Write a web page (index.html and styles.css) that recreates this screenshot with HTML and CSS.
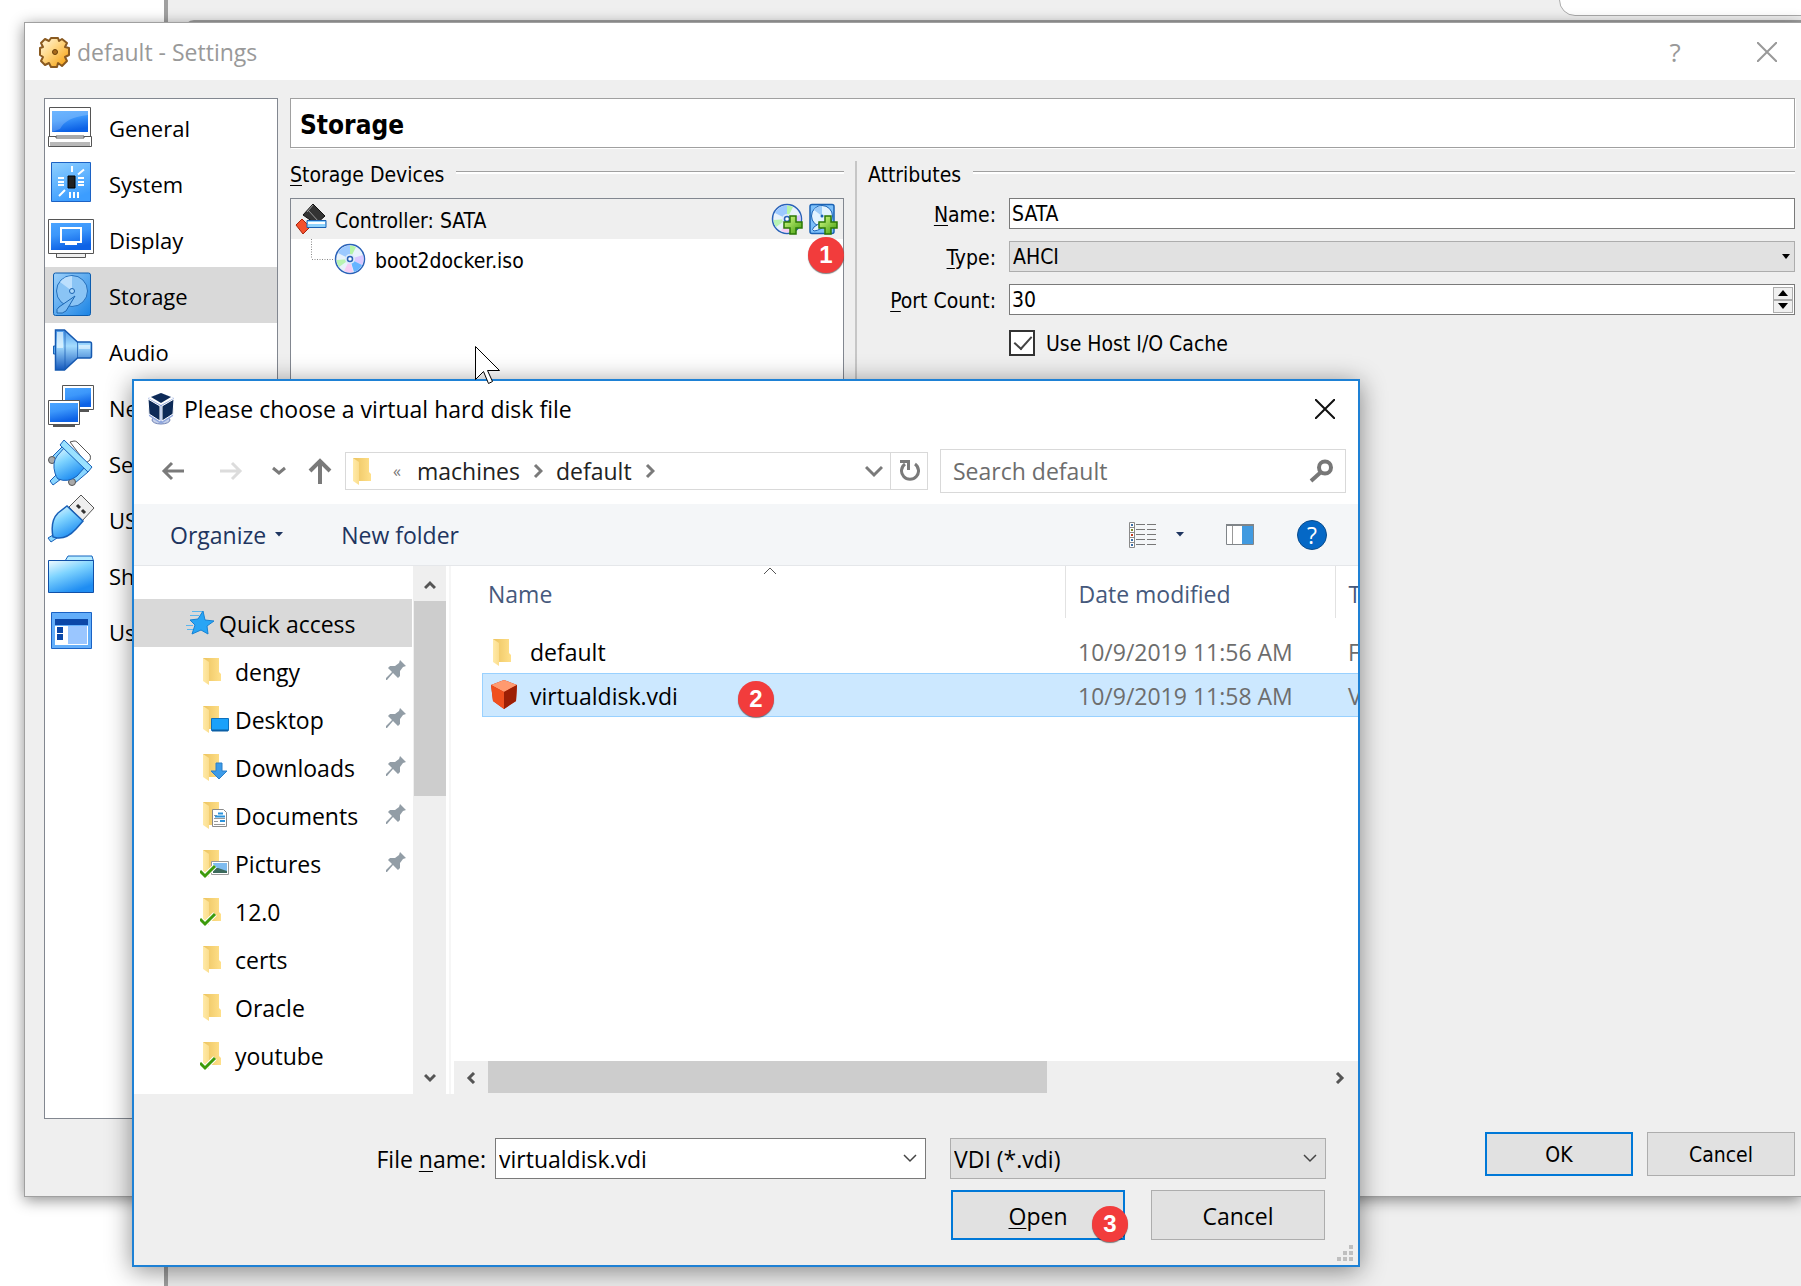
FILE: index.html
```html
<!DOCTYPE html>
<html lang="en">
<head>
<meta charset="utf-8">
<meta name="viewport" content="width=device-width, initial-scale=1">
<title>default - Settings</title>
<link rel="stylesheet" href="styles.css">
</head>
<body>
<svg class="defs" aria-hidden="true">
  <defs>
    <linearGradient id="screen" x1="0" y1="0" x2="0.3" y2="1"><stop offset="0" stop-color="#4aa4ff"/><stop offset=".45" stop-color="#3c97fb"/><stop offset="1" stop-color="#0d62e6"/></linearGradient>
    <linearGradient id="sky" x1="0" y1="0" x2="0.4" y2="1"><stop offset="0" stop-color="#8fd0ff"/><stop offset="1" stop-color="#3c9dff"/></linearGradient>
    <linearGradient id="ice" x1="0" y1="0" x2="0.5" y2="1"><stop offset="0" stop-color="#f2fcff"/><stop offset=".45" stop-color="#7fd4ff"/><stop offset="1" stop-color="#1f8df2"/></linearGradient>
    <linearGradient id="cone" x1="0" y1="0" x2="0" y2="1"><stop offset="0" stop-color="#4e9bea"/><stop offset=".4" stop-color="#a4dcff"/><stop offset="1" stop-color="#1458bd"/></linearGradient>
    <linearGradient id="disk" x1="0" y1="0" x2="1" y2="1"><stop offset="0" stop-color="#9fd2fb"/><stop offset="1" stop-color="#1a83e4"/></linearGradient>
    <linearGradient id="flap" x1="0" y1="0" x2="1" y2="0"><stop offset="0" stop-color="#ffeaa8"/><stop offset="1" stop-color="#fbdd8d"/></linearGradient>
    <linearGradient id="folderback" x1="0" y1="0" x2="1" y2="0"><stop offset="0" stop-color="#ecc35f"/><stop offset="1" stop-color="#ffe08a"/></linearGradient>
    <linearGradient id="gold" x1="0" y1="0" x2="1" y2="1"><stop offset="0" stop-color="#fff8e4"/><stop offset=".4" stop-color="#ffd98a"/><stop offset="1" stop-color="#f59a00"/></linearGradient>
    <linearGradient id="plus" x1="0" y1="0" x2="1" y2="1"><stop offset="0" stop-color="#d9ff8a"/><stop offset="1" stop-color="#3f9c0a"/></linearGradient>
    <symbol id="folder" viewBox="0 0 28 32">
      <path d="M3 3h16v14l2 2v7H3z" fill="url(#folderback)"/>
      <path d="M3 3l6 4v23l-6-4z" fill="url(#flap)"/>
    </symbol>
    <symbol id="tick" viewBox="0 0 28 32">
      <path d="M0 24l5 5L15 19" fill="none" stroke="#fff" stroke-width="5"/>
      <path d="M0 24l5 5L15 19" fill="none" stroke="#3d9b0b" stroke-width="3"/>
    </symbol>
    <symbol id="pin" viewBox="0 0 20 20">
      <path d="M14 0l6 6-3 1-3 4 0 5-2 2-5-5-6 7-1 0 0-2 6-6-4-4 2-2 5 0 4-3z" fill="#929da6"/>
    </symbol>
    <symbol id="disc" viewBox="0 0 32 32">
      <circle cx="16" cy="16" r="14.500" fill="#e8f2fb" stroke="#2a62b8" stroke-width="1.500"/>
      <path d="M16 16L4 10A13.500 13.500 0 0 1 16 2.500z" fill="#9cc9ff"/>
      <path d="M16 16V2.500a13 13 0 0 1 6 1.500z" fill="#b5f5a8"/>
      <path d="M16 16l13-4a13.500 13.500 0 0 1-1 10z" fill="#d9c8ff"/>
      <path d="M16 16l12 6a13 13 0 0 1-8 7z" fill="#66b4ff"/>
      <path d="M16 16l3 13a13 13 0 0 1-9-1z" fill="#f6cdf4"/>
      <path d="M16 16L5 24a13 13 0 0 1-2.500-7z" fill="#b9f3b3"/>
      <circle cx="16" cy="16" r="5" fill="#dcebfb"/>
      <circle cx="16" cy="16" r="2.500" fill="#fff" stroke="#2a62b8" stroke-width="1.500"/>
    </symbol>
    <symbol id="add" viewBox="0 0 20 20">
      <path d="M7 1h6v6h6v6h-6v6H7v-6H1V7h6z" fill="url(#plus)" stroke="#2c7806" stroke-width="1.500"/>
    </symbol>
    <symbol id="thinchev" viewBox="0 0 14 9"><path d="M1 1l6 6 6-6" fill="none" stroke="#444" stroke-width="1.500"/></symbol>
  </defs>
</svg>

<div class="desktop">
  <div class="backwin">
    <div class="backwin-search"></div>
    <div class="backwin-panel"></div>
  </div>

  <section class="settings" aria-label="default - Settings">
    <header class="titlebar">
      <svg class="app-icon" width="32" height="32" viewBox="0 0 32 32">
        <path d="M12 2h7l1 3 3-2 5 4-2 4 4 1v7l-4 2 2 4-5 5-4-3-1 4h-6l-2-4-4 2-4-4 2-4-3-2v-7l3-1-2-4 4-4 4 2z" fill="url(#gold)" stroke="#8a5a20" stroke-width="2" stroke-linejoin="round"/>
        <circle cx="16" cy="16" r="2.500" fill="#a86a1c" stroke="#6b4008"/>
      </svg>
      <h1 class="titlebar-text">default - Settings</h1>
      <button class="caption-btn help" type="button" aria-label="Help">?</button>
      <button class="caption-btn" type="button" aria-label="Close">
        <svg width="20" height="20" viewBox="0 0 20 20"><path d="M0 0l20 20M20 0L0 20" stroke="#999" stroke-width="2"/></svg>
      </button>
    </header>

    <div class="settings-body">
      <nav class="categories" aria-label="Categories">
        <a class="category" href="#general"><svg viewBox="0 0 46 44"><path d="M1.500 2.500h41v29h-41z" fill="#fff" stroke="#555"/><path d="M4 6h36v21H4z" fill="url(#screen)"/><path d="M4 6h36v4Q18 12 12 24l-8 3z" fill="#fff" opacity=".2"/><path d="M.500 31.500h43v10H.500z" fill="#fff" stroke="#555"/><path d="M2 37h40v4H2z" fill="#b8b8b8"/><path d="M8 31h28v2H8z" fill="#fff" stroke="#555"/></svg><span>General</span></a>
        <a class="category" href="#system"><svg viewBox="0 0 46 44"><path d="M3.500 1.500h39v39h-39z" fill="url(#sky)" stroke="#1c62c4"/><path d="M20 15h7v12h-7z" fill="#222" stroke="#000"/><path d="M10 17h6M10 21h6M10 24h6M30 17h6M30 21h6M30 24h6M24 5v6M22 31v6M26 31v6M30 31v6M30 13.500l6-5M11 35l6-6" stroke="#fff" stroke-width="2"/></svg><span>System</span></a>
        <a class="category" href="#display"><svg viewBox="0 0 46 44"><path d="M8.500 36.500h29v4h-29z" fill="#eee" stroke="#555"/><path d="M.500 2.500h45v34H.500z" fill="#fff" stroke="#555"/><path d="M3 6h40v27H3z" fill="url(#screen)"/><path d="M13 11h20v14H13zM17 27h12" fill="none" stroke="#fff" stroke-width="2"/></svg><span>Display</span></a>
        <a class="category current" href="#storage" aria-current="page"><svg viewBox="0 0 46 44"><rect x="5.500" y="0" width="37" height="42.500" rx="2" fill="url(#disk)" stroke="#0d5dae"/><circle cx="24" cy="18" r="15.500" fill="#8ac4f5" stroke="#2570bd"/><path d="M24 18L12 9a15 15 0 0 1 12-6z" fill="#c8e6ff" opacity=".8"/><circle cx="24" cy="18" r="2.500" fill="#a8d6fa" stroke="#1b62b0"/><path d="M27 23L11 34q-3 2-2 6 6 1 9-2z" fill="#7dbcf2" stroke="#1c66b2"/></svg><span>Storage</span></a>
        <a class="category" href="#audio"><svg viewBox="0 0 46 44"><path d="M5.500 17h3v8h-3z" fill="#6cc0ff" stroke="#1c62b4"/><path d="M7.500 1h9L29.500 13h12.500q1.500 0 1.500 2v12q0 2-1.500 2H29.500L16.500 41h-9z" fill="url(#cone)" stroke="#1659b0" stroke-width="1.500"/><path d="M17 1v40M29.500 13v16" stroke="#1659b0" opacity=".7"/><path d="M9 3h6v16H9z" fill="#e8f8ff" opacity=".7"/><path d="M31 16h11v4H31z" fill="#fff" opacity=".5"/></svg><span>Audio</span></a>
        <a class="category" href="#network"><svg viewBox="0 0 46 44"><path d="M14.500.500h31v24h-31z" fill="#fff" stroke="#555"/><path d="M17 3h26v19H17z" fill="url(#screen)"/><path d="M28 26h13" stroke="#555" stroke-width="2"/><path d="M.500 15.500h31v24H.500z" fill="#fff" stroke="#555"/><path d="M2 18h28v19H2z" fill="url(#screen)"/><path d="M5 41h22" stroke="#555" stroke-width="2"/></svg><span>Network</span></a>
        <a class="category" href="#serial"><svg viewBox="0 0 46 44"><path d="M22 1l4-1q2 0 3 1l13 13q1 2 0 5l-4 3z" fill="#fff" stroke="#555"/><path d="M4 16L16 4l5 5L9 21zM22 38l13-12 5 5-13 11z" fill="#8ad6ff" stroke="#1860b8"/><circle cx="4" cy="19" r="3.500" fill="#aaa" stroke="#555"/><circle cx="24" cy="41" r="3.500" fill="#aaa" stroke="#555"/><path d="M8 34l-6 6 3 4 8-6z" fill="#8ad6ff" stroke="#1860b8"/><path d="M7 32Q4 22 9 15l8-9 20 20-8 9Q20 42 10 38q-2-2-3-6z" fill="url(#ice)" stroke="#1860b8"/><path d="M12 4l4-5 28 27-4 5z" fill="#9ae2ff" stroke="#1860b8"/></svg><span>Serial Ports</span></a>
        <a class="category" href="#usb"><svg viewBox="0 0 46 44"><path d="M21 10L33-2 46 11 34 24z" fill="#eee" stroke="#555"/><path d="M29 8l3 3M34 13l3 3" stroke="#333" stroke-width="3"/><path d="M5 38l-5 3 3 4 6-4z" fill="#8ad6ff" stroke="#1860b8"/><path d="M5 40Q2 24 10 16l9-7 16 15-7 8Q19 42 9 41z" fill="url(#ice)" stroke="#1860b8" stroke-width="1.500"/></svg><span>USB</span></a>
        <a class="category" href="#shared"><svg viewBox="0 0 46 44"><path d="M17 8l3-5h24l1.500 5v6H17z" fill="#b8ecff" stroke="#1565c0"/><path d="M.500 7.500h45v32H.500z" fill="url(#ice)" stroke="#1050a8"/></svg><span>Shared Folders</span></a>
        <a class="category" href="#interface"><svg viewBox="0 0 46 44"><path d="M3.500 3.500h40v36h-40z" fill="#63aefa" stroke="#1a62c4"/><path d="M7 10h33v6H7z" fill="#0b47a8"/><path d="M7 17h33v19H7z" fill="#fff"/><path d="M9 18h6v6H9zM9 25h6v6H9z" fill="#0b47a8"/><path d="M20 17h19v18H20z" fill="#9ac6ff"/></svg><span>User Interface</span></a>
      </nav>

      <main class="page">
        <h2 class="page-title">Storage</h2>
        <div class="columns">
          <section class="devices">
            <h3 class="group-title"><span><u>S</u>torage Devices</span></h3>
            <div class="tree">
              <div class="tree-row controller">
                <svg class="ctrl-icon" width="32" height="32" viewBox="0 0 32 32"><path d="M18 1l12 12-9 8L8 12z" fill="#333" stroke="#111"/><path d="M13 7l11 12M18 2l-6 7" stroke="#999"/><path d="M1 22l6-6 8 8-7 7z" fill="#f4502c" stroke="#a8230c"/><path d="M12 17.500h19v7H12z" fill="#8fd2fb" stroke="#1a62b4"/><path d="M13 19h17v2H13z" fill="#fff"/></svg>
                <span class="tree-text">Controller: SATA</span>
                <button class="tool" type="button" aria-label="Add optical drive"><svg width="32" height="32" viewBox="0 0 32 32"><use href="#disc"/><use href="#add" x="12" y="12" width="20" height="20"/></svg></button>
                <button class="tool" type="button" aria-label="Add hard disk"><svg width="32" height="32" viewBox="0 0 32 32"><rect x="2" y="1.500" width="24" height="29" rx="2" fill="#7cc0fa" stroke="#1a62b4" stroke-width="1.500"/><circle cx="14" cy="13" r="10.500" fill="#e2f3ff" stroke="#1a62b4"/><path d="M14 13L6 7a10 10 0 0 1 8-4z" fill="#9ccbf8"/><circle cx="14" cy="13" r="1.500" fill="#1a62b4"/><path d="M12 20l-6 4q-3 3 0 4 3 0 8-3" fill="#e2f3ff" stroke="#1a62b4"/><use href="#add" x="10" y="12" width="20" height="20"/></svg></button>
              </div>
              <div class="tree-row medium">
                <svg width="30" height="40" viewBox="0 0 30 40"><path d="M7.500 0v20M8 20.500h22" stroke="#888" stroke-dasharray="1 1.500" fill="none"/></svg>
                <svg width="32" height="32" viewBox="0 0 32 32"><use href="#disc"/></svg>
                <span class="tree-text">boot2docker.iso</span>
              </div>
              <span class="badge badge-add">1</span>
            </div>
          </section>

          <section class="attributes">
            <h3 class="group-title"><span>Attributes</span></h3>
            <div class="form">
              <label for="name"><u>N</u>ame:</label>
              <input class="field" id="name" type="text" value="SATA">
              <label for="type"><u>T</u>ype:</label>
              <div class="picker">
                <select class="field" id="type"><option>AHCI</option></select>
                <svg width="8" height="5" viewBox="0 0 8 5"><path d="M0 0h8L4 5z"/></svg>
              </div>
              <label for="ports"><u>P</u>ort Count:</label>
              <div class="field spin">
                <input id="ports" type="number" value="30">
                <div class="spin-buttons">
                  <button type="button" aria-label="Increase"><svg width="10" height="6" viewBox="0 0 10 6"><path d="M0 6h10L5 0z"/></svg></button>
                  <button type="button" aria-label="Decrease"><svg width="10" height="6" viewBox="0 0 10 6"><path d="M0 0h10L5 6z"/></svg></button>
                </div>
              </div>
              <label class="check"><input type="checkbox" checked><span>Use Host I/O Cache</span></label>
            </div>
          </section>
        </div>
      </main>
    </div>

    <footer class="settings-footer">
      <button class="btn primary" type="button">OK</button>
      <button class="btn" type="button">Cancel</button>
    </footer>
  </section>

  <section class="dialog" role="dialog" aria-label="Please choose a virtual hard disk file">
    <header class="dialog-title">
      <svg width="28" height="34" viewBox="0 0 28 34"><ellipse cx="14" cy="28" rx="9" ry="4" fill="#c5d0ea" stroke="#6f82b4"/><path d="M14 1l13 5-1 18-12 8L2 24 1 6z" fill="#8fa6dd"/><path d="M14 1l13 5-13 7L1 6z" fill="#fff"/><path d="M14 1l10 4-10 6L4 5z" fill="#0d2a57"/><path d="M1 7l12 7v15L2 22z" fill="#0d2a57" stroke="#fff"/><path d="M27 7l-12 7v15l11-7z" fill="#0d2a57" stroke="#fff"/></svg>
      <h2>Please choose a virtual hard disk file</h2>
      <button class="close" type="button" aria-label="Close"><svg width="20" height="20" viewBox="0 0 20 20"><path d="M0 0l20 20M20 0L0 20" stroke="#111" stroke-width="2"/></svg></button>
    </header>

    <div class="navbar">
      <button class="nav-btn" type="button" aria-label="Back"><svg width="24" height="20" viewBox="0 0 24 20"><path d="M23 10H3M11 2l-8 8 8 8" fill="none" stroke="#7a7a7a" stroke-width="3"/></svg></button>
      <button class="nav-btn" type="button" aria-label="Forward"><svg width="24" height="20" viewBox="0 0 24 20"><path d="M1 10h20M13 2l8 8-8 8" fill="none" stroke="#dcdcdc" stroke-width="3"/></svg></button>
      <button class="nav-btn recent" type="button" aria-label="Recent locations"><svg width="14" height="10" viewBox="0 0 14 10"><path d="M1 2l6 5 6-5" fill="none" stroke="#7a7a7a" stroke-width="3"/></svg></button>
      <button class="nav-btn up" type="button" aria-label="Up"><svg width="24" height="26" viewBox="0 0 24 26"><path d="M12 26V3M2 13L12 3l10 10" fill="none" stroke="#7a7a7a" stroke-width="4"/></svg></button>
      <div class="address">
        <svg class="folder" width="28" height="32"><use href="#folder"/></svg>
        <span class="more">«</span>
        <a href="#machines">machines</a>
        <svg width="10" height="16" viewBox="0 0 10 16"><path d="M2 2l6 6-6 6" fill="none" stroke="#7a7a7a" stroke-width="3"/></svg>
        <a href="#default">default</a>
        <svg width="10" height="16" viewBox="0 0 10 16"><path d="M2 2l6 6-6 6" fill="none" stroke="#7a7a7a" stroke-width="3"/></svg>
        <button class="history" type="button" aria-label="Previous locations"><svg width="18" height="14" viewBox="0 0 18 14"><path d="M1 3l8 8 8-8" fill="none" stroke="#7a7a7a" stroke-width="3"/></svg></button>
        <button class="refresh" type="button" aria-label="Refresh"><svg width="22" height="24" viewBox="0 0 22 24"><path d="M17 5a8.500 8.500 0 1 1-10 0" fill="none" stroke="#7a7a7a" stroke-width="3"/><path d="M2 2.500h8.500V11" fill="none" stroke="#7a7a7a" stroke-width="3"/></svg></button>
      </div>
      <div class="search">
        <input type="text" placeholder="Search default" aria-label="Search default">
        <svg width="24" height="24" viewBox="0 0 24 24"><circle cx="16" cy="8.500" r="6" fill="none" stroke="#777" stroke-width="4"/><path d="M12 13L2 22" stroke="#777" stroke-width="4"/></svg>
      </div>
    </div>

    <div class="commands">
      <button type="button">Organize<svg width="8" height="5" viewBox="0 0 8 5"><path d="M0 0h8L4 4.500z" fill="#1e3560"/></svg></button>
      <button class="new-folder" type="button">New folder</button>
      <button class="view" type="button" aria-label="Change view"><svg width="28" height="26" viewBox="0 0 28 26"><path d="M.500.500h5v25h-5zM0 5.500h6M0 10.500h6M0 15.500h6M0 20.500h6" fill="#fff" stroke="#8a8a8a"/><path d="M2 3h2M2 18h2M2 23h2" stroke="#3a6ea8" stroke-width="2"/><path d="M2 8h2" stroke="#7c8a28" stroke-width="2"/><path d="M2 13h2" stroke="#c43a1a" stroke-width="2"/><path d="M7 2.500h9M18 2.500h9M7 7.500h9M18 7.500h9M7 12.500h9M18 12.500h9M7 17.500h9M18 17.500h9M7 22.500h9M18 22.500h9" stroke="#777"/></svg></button>
      <button class="view-more" type="button" aria-label="More view options"><svg width="8" height="5" viewBox="0 0 8 5"><path d="M0 0h8L4 4.500z" fill="#1e3560"/></svg></button>
      <button class="pane" type="button" aria-label="Preview pane"><svg width="28" height="21" viewBox="0 0 28 21"><path d="M.500.500h27v20H.500z" fill="#fff" stroke="#808589"/><path d="M0 1h28" stroke="#808589" stroke-width="2"/><path d="M6.500 2v18" stroke="#999"/><path d="M16 2h11v18H16z" fill="#419ae0"/></svg></button>
      <button class="help-btn" type="button" aria-label="Get help">?</button>
    </div>

    <div class="explorer">
      <nav class="places" aria-label="Places">
        <a class="place quick" href="#quick"><svg width="32" height="32" viewBox="0 0 32 32"><path d="M19 4l2 9 9 1-7 5 1 8-7-4-9 4 3-9-5-5 8-1z" fill="#28a5f5" stroke="#1682d4"/><path d="M8 4.500h10M6 8.500h9M2 18.500h7M3 22.500h6" stroke="#5bb6ee"/></svg><span>Quick access</span></a>
        <a class="place" href="#dengy"><svg width="28" height="32"><use href="#folder"/></svg><span>dengy</span><svg class="pin" width="20" height="20"><use href="#pin"/></svg></a>
        <a class="place" href="#desktop"><svg width="28" height="32" viewBox="0 0 28 32"><use href="#folder"/><path d="M11.500 15.500h17v12h-17z" fill="#1aa1fa" stroke="#0d70bd"/><path d="M12 27.500h16" stroke="#0b5fa5" stroke-width="2"/></svg><span>Desktop</span><svg class="pin" width="20" height="20"><use href="#pin"/></svg></a>
        <a class="place" href="#downloads"><svg width="28" height="32" viewBox="0 0 28 32"><use href="#folder"/><path d="M16 12h6v8h5l-8 8-8-8h5z" fill="#3c9be8" stroke="#2a7fc9"/></svg><span>Downloads</span><svg class="pin" width="20" height="20"><use href="#pin"/></svg></a>
        <a class="place" href="#documents"><svg width="28" height="32" viewBox="0 0 28 32"><use href="#folder"/><path d="M12.500 10.500h11l3 3v14h-14z" fill="#fff" stroke="#8a8a8a"/><path d="M14 16.500h3M14 19.500h11M14 22.500h4M14 25.500h11" stroke="#999"/><path d="M18 14.500h5M15 17.500h10M20 22h5" stroke="#2c93dc" stroke-width="2"/></svg><span>Documents</span><svg class="pin" width="20" height="20"><use href="#pin"/></svg></a>
        <a class="place" href="#pictures"><svg width="28" height="32" viewBox="0 0 28 32"><use href="#folder"/><path d="M11.500 14.500h17v13h-17z" fill="#fff" stroke="#999"/><path d="M13 16h14v10H13z" fill="#7fbcf0"/><path d="M13 21l5 0 9 3v2H13z" fill="#3c6a5c"/><use href="#tick"/></svg><span>Pictures</span><svg class="pin" width="20" height="20"><use href="#pin"/></svg></a>
        <a class="place" href="#v12"><svg width="28" height="32" viewBox="0 0 28 32"><use href="#folder"/><use href="#tick"/></svg><span>12.0</span></a>
        <a class="place" href="#certs"><svg width="28" height="32"><use href="#folder"/></svg><span>certs</span></a>
        <a class="place" href="#oracle"><svg width="28" height="32"><use href="#folder"/></svg><span>Oracle</span></a>
        <a class="place" href="#youtube"><svg width="28" height="32" viewBox="0 0 28 32"><use href="#folder"/><use href="#tick"/></svg><span>youtube</span></a>
      </nav>
      <div class="vscroll">
        <svg width="12" height="10" viewBox="0 0 12 10"><path d="M1 8l5-5 5 5" fill="none" stroke="#555" stroke-width="3"/></svg>
        <div class="vthumb"></div>
        <svg width="12" height="10" viewBox="0 0 12 10"><path d="M1 2l5 5 5-5" fill="none" stroke="#555" stroke-width="3"/></svg>
      </div>
      <div class="listing">
        <div class="files">
          <svg class="sort" width="14" height="8" viewBox="0 0 14 8"><path d="M1 7l6-6 6 6" fill="none" stroke="#555"/></svg>
          <table>
            <colgroup><col class="c-name"><col class="c-date"><col class="c-type"></colgroup>
            <thead><tr><th scope="col">Name</th><th scope="col">Date modified</th><th scope="col">Type</th></tr></thead>
            <tbody>
              <tr><td><div class="file"><svg width="28" height="32"><use href="#folder"/></svg>default</div></td><td>10/9/2019 11:56 AM</td><td>File folder</td></tr>
              <tr class="selected"><td><div class="file"><svg width="28" height="32" viewBox="0 0 28 32"><path d="M14 0l13 5-1 16-12 8L3 21 1 5z" fill="#c92c0c"/><path d="M14 0l13 5-13 7L1 5z" fill="#ff9a70"/><path d="M1 5l13 7v17L3 21z" fill="#f0501e"/><path d="M14 12l13-7-1 16-12 8z" fill="#9c1f05"/></svg>virtualdisk.vdi</div><span class="badge badge-file">2</span></td><td>10/9/2019 11:58 AM</td><td>VDI File</td></tr>
            </tbody>
          </table>
        </div>
        <div class="hscroll">
          <svg width="10" height="12" viewBox="0 0 10 12"><path d="M8 1L3 6l5 5" fill="none" stroke="#555" stroke-width="3"/></svg>
          <div class="htrack"><div class="hthumb"></div></div>
          <svg width="10" height="12" viewBox="0 0 10 12"><path d="M2 1l5 5-5 5" fill="none" stroke="#555" stroke-width="3"/></svg>
        </div>
      </div>
    </div>

    <footer class="dialog-footer">
      <div class="footer-row">
        <label for="filename">File <u>n</u>ame:</label>
        <div class="combo">
          <input id="filename" type="text" value="virtualdisk.vdi">
          <button type="button" aria-label="Recent file names"><svg width="14" height="9"><use href="#thinchev"/></svg></button>
        </div>
        <div class="picker filter">
          <select aria-label="File type"><option>VDI (*.vdi)</option></select>
          <svg width="14" height="9"><use href="#thinchev"/></svg>
        </div>
      </div>
      <div class="footer-row actions">
        <button class="btn primary" type="button"><span><u>O</u>pen</span><span class="badge badge-open">3</span></button>
        <button class="btn" type="button">Cancel</button>
      </div>
      <svg class="grip" width="16" height="16" viewBox="0 0 16 16"><path d="M12 0h4v4h-4zM6 6h4v4H6zM12 6h4v4h-4zM0 12h4v4H0zM6 12h4v4H6zM12 12h4v4h-4z" fill="#bfbfbf"/></svg>
    </footer>
  </section>

  <svg class="cursor" width="28" height="40" viewBox="0 0 28 40"><path d="M.500.500v33l8-8 5 12 4-2-5-11h12z" fill="#fff" stroke="#000"/></svg>
</div>
</body>
</html>
```

FILE: styles.css
```css
:root {
  --ui: "Open Sans", "Noto Sans", sans-serif;
  --form: "DejaVu Sans Condensed", "DejaVu Sans", sans-serif;
  --face: #efefef;
  --accent: #0078d7;
}

* { box-sizing: border-box; }

body {
  margin: 0;
  font-family: var(--ui);
  font-size: 23px;
  line-height: 32px;
  color: #000;
}

h1, h2, h3 { margin: 0; font-weight: 400; font-size: inherit; }
a { color: inherit; text-decoration: none; }
u { text-underline-offset: 3px; text-decoration-thickness: 1px; }
svg { display: block; flex: none; }

button {
  padding: 0;
  border: 0;
  background: none;
  font: inherit;
  color: inherit;
  display: flex;
  align-items: center;
  justify-content: center;
}

input, select { font: inherit; color: inherit; border-radius: 0; }
input:focus, select:focus { outline: none; }

.defs { position: absolute; width: 0; height: 0; }

.desktop {
  position: relative;
  min-height: 100vh;
  overflow: hidden;
  background: #fff;
}

/* window behind the settings window */
.backwin {
  position: absolute;
  inset: 0 0 0 164px;
  border-left: 4px solid #a0a0a0;
  background: var(--face);
}

.backwin-search {
  position: absolute;
  top: -20px;
  left: 1391px;
  right: -20px;
  height: 36px;
  border: 1px solid #aaa;
  border-radius: 16px;
  background: #fff;
}

.backwin-panel {
  position: absolute;
  top: 20px;
  left: 16px;
  right: 0;
  height: 40px;
  border: 2px solid #a0a0a0;
  border-radius: 10px 0 0 0;
}

/* settings window */
.settings {
  position: absolute;
  inset: 22px 0 89px 24px;
  display: flex;
  flex-direction: column;
  border: 1px solid #a0a0a0;
  border-right: 0;
  background: var(--face);
  box-shadow: 0 3px 14px rgba(0, 0, 0, .45);
}

.titlebar {
  display: flex;
  align-items: center;
  height: 57px;
  padding: 0 24px 0 14px;
  background: #fff;
  color: #999;
}

.titlebar-text { flex: 1; padding-left: 6px; }
.caption-btn { width: 20px; margin-left: 72px; }
.help { font-size: 26px; }

.settings-body {
  flex: 1;
  display: flex;
  gap: 12px;
  padding: 18px 6px 0 19px;
  min-height: 0;
}

.categories {
  width: 234px;
  flex: none;
  border: 1px solid #828790;
  background: #fff;
  overflow: hidden;
}

.category {
  display: flex;
  align-items: center;
  gap: 15px;
  height: 56px;
  padding-left: 3px;
  font-size: 22px;
  white-space: nowrap;
}

.category svg { width: 46px; height: 44px; overflow: visible; }
.category span { padding-top: 2px; }
.current { background: #d9d9d9; }

.page {
  flex: 1;
  display: flex;
  flex-direction: column;
  min-width: 0;
  font-family: var(--form);
  font-size: 21px;
  line-height: 26px;
}

.page-title {
  height: 50px;
  padding: 1px 9px 0;
  border: 1px solid #a0a0a0;
  background: #fff;
  font-size: 26px;
  font-weight: 700;
  line-height: 50px;
  box-shadow: 1px 1px 0 #fff;
}

.columns { flex: 1; display: flex; margin-top: 13px; }

.devices {
  flex: none;
  width: 567px;
  display: flex;
  flex-direction: column;
  padding-right: 11px;
  border-right: 2px solid #c6c6c6;
}

.attributes { flex: 1; padding-left: 11px; }

.group-title {
  display: flex;
  align-items: center;
  gap: 12px;
  padding-top: 1px;
  margin-bottom: 10px;
}

.group-title::after {
  content: "";
  flex: 1;
  height: 2px;
  margin-bottom: 5px;
  border-top: 1px solid #a0a0a0;
  background: #fff;
}

.tree {
  position: relative;
  flex: 1;
  border: 1px solid #828790;
  background: #fff;
}

.tree-row { display: flex; align-items: center; height: 40px; padding: 0 3px 0 4px; }
.tree-text { padding-top: 3px; }
.controller { background: var(--face); gap: 5px; }
.controller .tree-text { flex: 1; padding-left: 3px; }
.tool { width: 32px; }
.medium { padding-left: 13px; }
.medium .tree-text { padding-left: 9px; }

.form {
  display: grid;
  grid-template-columns: 128px 1fr;
  gap: 12px 13px;
  align-items: center;
}

.form > label { text-align: right; padding-top: 2px; }

.field {
  width: 100%;
  height: 31px;
  padding: 1px 2px 0;
  border: 1px solid #7a7a7a;
  background: #fff;
}

.picker { position: relative; }

.picker select {
  display: block;
  width: 100%;
  padding: 1px 3px 0;
  border: 1px solid #adadad;
  background: #e1e1e1;
  appearance: none;
}

.picker svg {
  position: absolute;
  right: 5px;
  top: 13px;
  pointer-events: none;
}

.spin { display: flex; align-items: center; padding: 0 1px 0 2px; }

.spin input {
  flex: 1;
  min-width: 0;
  padding: 1px 0 0;
  border: 0;
  background: none;
  appearance: textfield;
}

.spin input::-webkit-inner-spin-button { appearance: none; }

.spin-buttons button {
  width: 20px;
  height: 13px;
  border: 1px solid #adadad;
  background: #f0f0f0;
}

.form > .check {
  grid-column: 2;
  display: flex;
  align-items: center;
  gap: 11px;
}

.check span { padding-top: 2px; }

.check input {
  appearance: none;
  width: 26px;
  height: 26px;
  margin: 0;
  border: 2px solid #333;
  background: #fff;
  position: relative;
}

.check input::after {
  content: "";
  position: absolute;
  left: 7px;
  top: 0;
  width: 8px;
  height: 15px;
  border: solid #444;
  border-width: 0 2px 2px 0;
  transform: rotate(42deg);
}

.settings-footer {
  display: flex;
  justify-content: flex-end;
  gap: 14px;
  padding: 13px 6px 20px;
  font-family: var(--form);
  font-size: 21px;
}

.btn {
  position: relative;
  width: 148px;
  height: 44px;
  padding-top: 2px;
  border: 1px solid #adadad;
  background: #e1e1e1;
}

.btn.primary { border: 2px solid var(--accent); }

/* file dialog */
.dialog {
  position: absolute;
  inset: 379px 441px 19px 132px;
  display: flex;
  flex-direction: column;
  border: 2px solid #1e81d5;
  background: #fff;
  box-shadow: 0 4px 24px rgba(0, 0, 0, .45);
}

.dialog-title {
  display: flex;
  align-items: center;
  gap: 9px;
  height: 56px;
  padding: 0 23px 0 13px;
}

.dialog-title h2 { flex: 1; }

.navbar {
  display: flex;
  align-items: center;
  height: 67px;
  padding: 0 12px 0 10px;
  color: #222;
}

.nav-btn { width: 58px; height: 38px; }
.recent { width: 38px; }
.up { width: 44px; }

.address {
  flex: 1;
  display: flex;
  align-items: center;
  height: 38px;
  margin: 0 12px 0 3px;
  padding-left: 4px;
  border: 1px solid #d9d9d9;
}

.address a { padding: 0 13px; }
.more { width: 26px; padding-left: 15px; font-size: 16px; color: #777; }
.history { width: 32px; margin-left: auto; }
.refresh { width: 37px; height: 36px; border-left: 1px solid #d9d9d9; }

.search {
  display: flex;
  align-items: center;
  width: 406px;
  height: 44px;
  padding: 0 12px;
  border: 1px solid #d9d9d9;
}

.search input { flex: 1; min-width: 0; padding: 0; border: 0; background: none; }
.search input::placeholder { color: #6d6d6d; opacity: 1; }

.commands {
  display: flex;
  align-items: center;
  height: 62px;
  padding: 0 31px 0 36px;
  border-bottom: 1px solid #e5e7ea;
  background: #f4f6f8;
  color: #1e3560;
}

.commands button { gap: 9px; }
.commands .new-folder { margin-left: 58px; }
.commands .view { margin-left: auto; }
.commands .view-more { margin-left: 19px; }
.commands .pane { margin-left: 42px; }

.commands .help-btn {
  width: 30px;
  height: 30px;
  margin-left: 43px;
  border: 1px solid #0a4c8c;
  border-radius: 50%;
  background: #0568c6;
  color: #fff;
}

.explorer { flex: 1; display: flex; min-height: 0; }

.places { width: 278px; flex: none; padding-top: 33px; }

.place {
  display: flex;
  align-items: center;
  gap: 7px;
  height: 48px;
  padding: 0 6px 0 66px;
}

.place svg { overflow: visible; }
.place span { flex: 1; padding-top: 2px; }
.quick { padding-left: 50px; gap: 3px; background: #d9d9d9; }
.place .pin { margin-top: -3px; }

.vscroll {
  width: 33px;
  flex: none;
  display: flex;
  flex-direction: column;
  align-items: center;
  margin-left: 1px;
  padding: 14px 0 11px;
  background: var(--face);
}

.vthumb { width: 32px; height: 195px; margin: 11px 0 auto; background: #cdcdcd; }

.listing {
  flex: 1;
  display: flex;
  flex-direction: column;
  min-width: 0;
  margin-left: 3px;
  border-left: 2px solid #f6f6f6;
}

.files { position: relative; flex: 1; padding-left: 31px; overflow: hidden; }
.sort { position: absolute; left: 312px; top: 1px; }

table {
  width: 1000px;
  table-layout: fixed;
  border-collapse: collapse;
  font-size: 23px;
  white-space: nowrap;
}

.c-name { width: 583px; }
.c-date { width: 270px; }

th {
  height: 52px;
  padding: 4px 0 0 13px;
  border-left: 1px solid #e2e2e2;
  font-weight: 400;
  text-align: left;
  color: #46597c;
}

th:first-child { padding-left: 6px; border-left: 0; }
tbody::before { content: ""; display: block; height: 11px; }
td { position: relative; height: 44px; padding: 2px 0 0 13px; color: #6d6d6d; }
td:first-child { padding-left: 8px; color: #000; }
.file { display: flex; align-items: center; gap: 12px; }
.selected { background: #cce8ff; outline: 1px solid #99d1ff; outline-offset: -1px; }

.hscroll {
  display: flex;
  align-items: center;
  height: 33px;
  margin-left: 3px;
  padding: 0 13px 0 12px;
  background: var(--face);
}

.htrack { flex: 1; height: 32px; margin: 0 12px; align-self: flex-start; }
.hthumb { width: 67%; height: 32px; background: #cdcdcd; }

.dialog-footer {
  position: relative;
  display: flex;
  flex-direction: column;
  gap: 11px;
  padding: 44px 32px 25px;
  background: var(--face);
}

.footer-row { display: flex; align-items: center; justify-content: flex-end; }
.footer-row label { margin-right: 9px; }

.combo {
  display: flex;
  align-items: center;
  width: 431px;
  height: 41px;
  margin-right: 24px;
  padding: 0 8px 0 3px;
  border: 1px solid #7a7a7a;
  background: #fff;
}

.combo input { flex: 1; min-width: 0; padding: 0; border: 0; background: none; }
.filter { width: 376px; }
.filter select { height: 41px; }
.filter svg { right: 9px; top: 16px; }
.actions { gap: 26px; padding-right: 1px; }
.actions .btn { width: 174px; height: 50px; }
.grip { position: absolute; right: 5px; bottom: 4px; }

/* step markers */
.badge {
  position: absolute;
  width: 36px;
  height: 36px;
  border-radius: 50%;
  background: #f23c3c;
  box-shadow: 0 1px 1px rgba(0, 0, 0, .5);
  color: #fff;
  font-family: "Liberation Sans", sans-serif;
  font-size: 24px;
  font-weight: 700;
  line-height: 36px;
  text-align: center;
}

.badge-add { right: -1px; top: 38px; }
.badge-file { left: 256px; top: 8px; }
.badge-open { right: -5px; top: 14px; }

.cursor { position: absolute; left: 475px; top: 346px; }
```
